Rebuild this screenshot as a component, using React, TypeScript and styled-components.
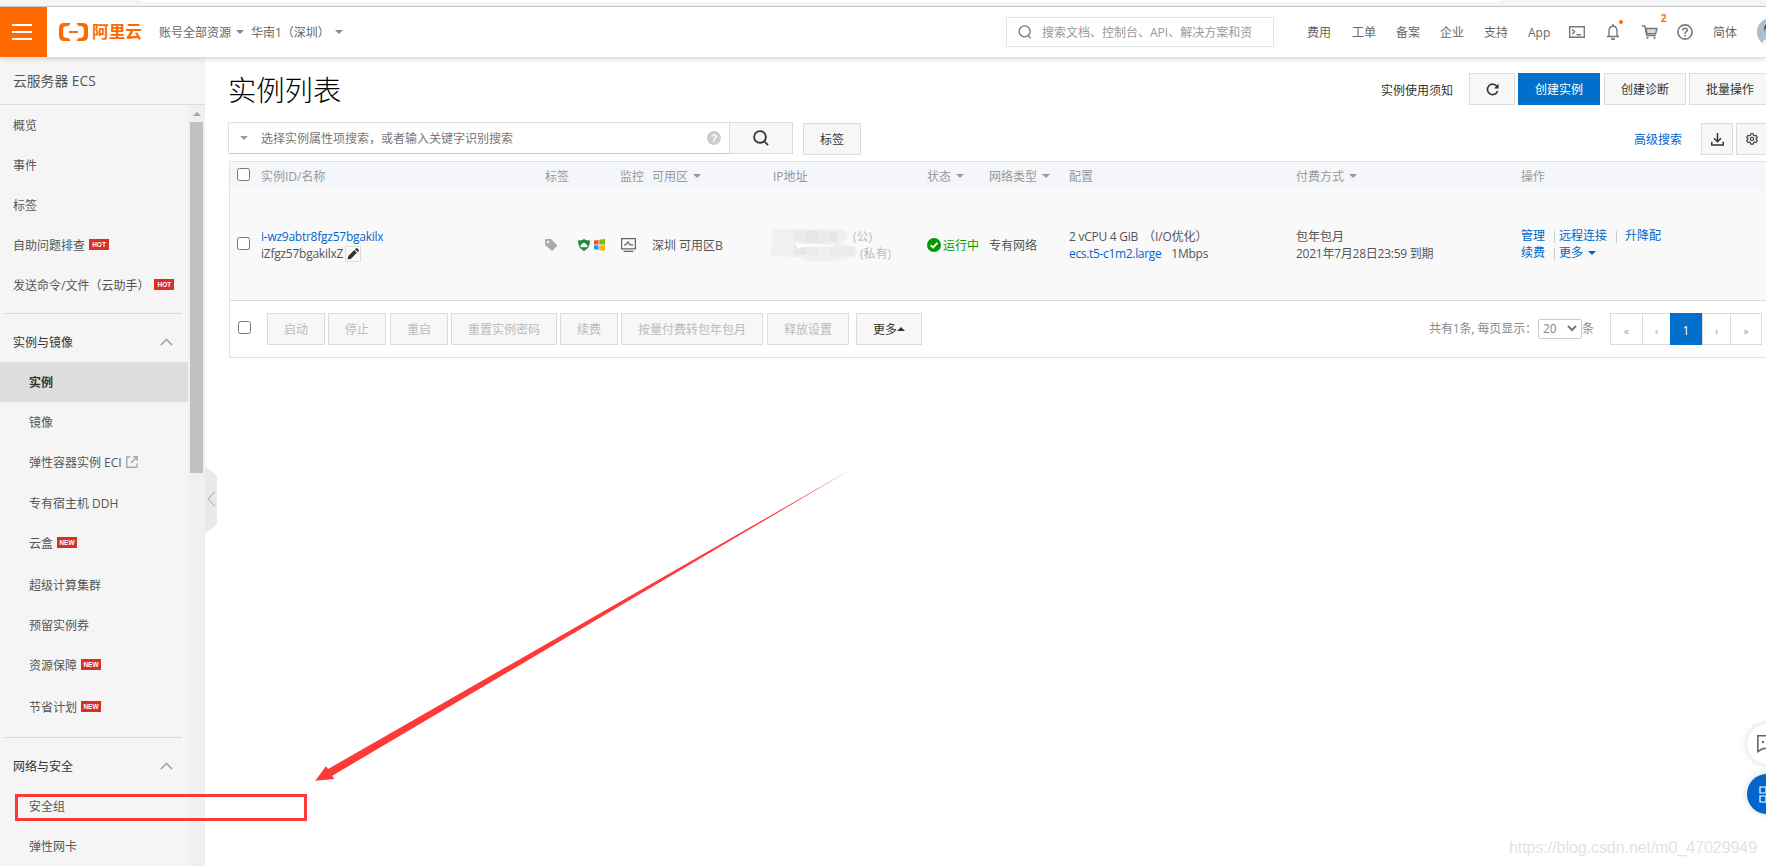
import React from "react";
import styled, { createGlobalStyle, css } from "styled-components";

const Global = createGlobalStyle`
  *, *::before, *::after { box-sizing: border-box; }
  html, body { margin: 0; padding: 0; overflow: hidden; background: #fff; }
  body { font: 12px/17px "Open Sans", "Noto Sans CJK SC", sans-serif; color: #555; }
  svg { display: block; flex: none; }
  a { color: #06c; text-decoration: none; }
`;

const Page = styled.div`
  width: 1766px; height: 866px; position: relative; overflow: hidden;
  display: flex; flex-direction: column; white-space: nowrap;
`;
const BrowserStrip = styled.div`
  height: 7px; flex: none; background: #f5f5f5; border-bottom: 1px solid #ccc;
  padding-left: 141px;
`;
const AddressBar = styled.div`
  width: 1360px; height: 2px; background: #fff; border-radius: 0 0 3px 3px;
`;
const TopBar = styled.header`
  height: 50px; flex: none; background: #fff; display: flex; align-items: center;
  position: relative; z-index: 2; box-shadow: 0 1px 0 #dcdcdc, 0 2px 5px rgba(0,0,0,.16);
  color: #666;
`;
const MenuButton = styled.div`
  width: 47px; height: 50px; background: #ff6a00; display: flex; flex-direction: column;
  align-items: center; justify-content: center; gap: 5px; padding-right: 3px;
  i { width: 20px; height: 2px; background: #fff; }
`;
const Brand = styled.div`
  display: flex; align-items: center; gap: 4px; margin-left: 12px; width: 100px;
  color: #ff6a00; font-size: 16.7px; font-weight: 700; line-height: 24px;
`;
const TopSelect = styled.div<{ $w: number; $gap: number }>`
  width: ${p => p.$w}px; display: flex; align-items: center; gap: ${p => p.$gap}px;
`;
const Caret = styled.i<{ $up?: boolean; $color?: string; $size?: number }>`
  width: 0; height: 0; flex: none;
  border: ${p => p.$size ?? 4}px solid transparent;
  ${p => p.$up
    ? css`border-bottom-color: ${p.$color ?? "#888"}; border-top: 0;`
    : css`border-top-color: ${p.$color ?? "#888"}; border-bottom: 0;`}
`;
const TopSearch = styled.div`
  margin-left: auto; width: 268px; height: 30px; border: 1px solid #e3e3e3; color: #999;
  display: flex; align-items: center; gap: 10px; padding-left: 11px;
`;
const TopNav = styled.nav`
  display: flex; align-items: center; margin-left: 33px; width: 459px; flex: none;
`;
const TopItem = styled.div<{ $w: number }>`
  width: ${p => p.$w}px; flex: none; position: relative; display: flex; align-items: center;
`;
const Dot = styled.i`
  position: absolute; left: 13px; top: -4px; width: 4px; height: 4px; border-radius: 50%; background: #ff6a00;
`;
const Count = styled.b`
  position: absolute; left: 19px; top: -13px; color: #ff6a00; font: 700 10px/14px "Liberation Sans", sans-serif;
`;
const Avatar = styled.div`
  width: 28px; height: 28px; flex: none; border-radius: 50%; overflow: hidden; background: #a9c1cc;
`;

const Body = styled.div` flex: 1; min-height: 0; display: flex; `;
const Sidebar = styled.aside`
  width: 205px; flex: none; background: #f5f5f5; display: flex; flex-direction: column;
`;
const ServiceName = styled.div`
  height: 48px; flex: none; padding: 0 13px; border-bottom: 1px solid #dcdcdc;
  display: flex; align-items: center; font-size: 13.8px;
`;
const SideScroll = styled.div` flex: 1; min-height: 0; display: flex; overflow: hidden; `;
const NavList = styled.div` width: 188px; `;
const NavItem = styled.div<{ $child?: boolean; $active?: boolean; $top?: number }>`
  height: 40px; margin-top: ${p => p.$top ?? 0}px; padding-left: ${p => (p.$child ? 29 : 13)}px;
  display: flex; align-items: center;
  ${p => p.$active && css`background: #ddd; color: #333; font-weight: 700;`}
`;
const Section = styled.div`
  height: 40px; padding: 0 15px 0 13px; display: flex; align-items: center;
  justify-content: space-between; color: #333;
`;
const Divider = styled.div<{ $top: number }>`
  height: 1px; margin: ${p => p.$top}px 6px 8px 4px; background: #d8d8d8;
`;
const Badge = styled.span<{ $ml?: number }>`
  width: 20px; height: 11px; margin: 0 0 2px ${p => p.$ml ?? 4}px; background: #d93026; color: #fff;
  font: 700 6.5px/11px "Liberation Sans", sans-serif; text-align: center;
`;
const ScrollTrack = styled.div`
  width: 17px; background: #f0f0f0; display: flex; flex-direction: column; align-items: center; padding-top: 7px;
`;
const Thumb = styled.div` width: 13px; height: 351px; margin-top: 6px; background: #c1c1c1; `;
const CollapseHandle = styled.div`
  width: 12px; height: 66px; margin-top: 410px; flex: none; background: #e9e9e9;
  clip-path: polygon(0 0, 100% 12%, 100% 88%, 0 100%);
  display: flex; align-items: center; justify-content: center; padding-bottom: 2px;
`;

const Main = styled.main` width: 1549px; flex: none; padding-left: 11px; `;
const HeadRow = styled.div`
  height: 64px; margin-right: -5px; display: flex; align-items: center; color: #333;
`;
const Title = styled.h1`
  margin: 0; padding-top: 2px; font-size: 28.3px; line-height: 40px; font-weight: 300; color: #000; flex: 1;
`;
const Notice = styled.span` padding-top: 2px; `;
const Button = styled.div<{ $w: number; $primary?: boolean; $off?: boolean; $ml?: number }>`
  width: ${p => p.$w}px; height: 32px; margin-left: ${p => p.$ml ?? 3}px; flex: none;
  border: 1px solid ${p => (p.$primary ? "#0070cc" : "#dcdcdc")};
  background: ${p => (p.$primary ? "#0070cc" : "#f7f7f7")};
  color: ${p => (p.$primary ? "#fff" : p.$off ? "#bbb" : "#333")};
  display: flex; align-items: center; justify-content: center;
`;
const FilterRow = styled.div`
  height: 40px; display: flex; align-items: center; padding-bottom: 4px;
`;
const SearchField = styled.div`
  width: 502px; height: 32px; flex: none; margin-top: -2px; border: 1px solid #ddd; border-bottom-color: #c8c8c8;
  border-radius: 2px 0 0 2px; display: flex; align-items: center; padding: 0 8px 0 11px; color: #777;
  span { margin-left: 13px; flex: 1; }
`;
const SearchBtn = styled(Button)` margin-top: -2px; `;
const HelpDot = styled.i`
  width: 14px; height: 14px; border-radius: 50%; background: #ccc; color: #fff;
  font: 700 11px/14px "Liberation Sans", sans-serif; text-align: center;
`;
const Table = styled.section`
  margin-left: 1px; border: solid #dfe2e8; border-width: 1px 0 1px 1px; width: 1537px;
`;
const gridCols = css`
  display: grid; grid-template-columns: 31px 284px 75px 32px 121px 154px 62px 80px 227px 225px 1fr;
`;
const TableHead = styled.div`
  ${gridCols} height: 28px; background: #f4f6fa; color: #999; align-items: center;
`;
const HeadCell = styled.div` display: flex; align-items: center; gap: 5px; `;
const TableRow = styled.div`
  ${gridCols} height: 111px; background: #f9f9f9; border-bottom: 1px solid #dcdcdc; align-items: center;
`;
const Check = styled.i<{ $ml?: number }>`
  width: 13px; height: 13px; flex: none; margin: 0 0 3px ${p => p.$ml ?? 7}px; background: #fff;
  border: 1px solid #767676; border-radius: 2.5px;
`;
const Line = styled.div<{ $pl?: number; $muted?: boolean }>`
  height: 17px; display: flex; align-items: center; padding-left: ${p => p.$pl ?? 0}px;
  ${p => p.$muted && "color: #bbb;"}
`;
const Tight = styled.span<{ $by?: number }>` letter-spacing: -${p => p.$by ?? 0.25}px; `;
const EditBox = styled.div`
  width: 16px; height: 16px; margin-left: 2px; border: 1px solid #ddd; display: flex; align-items: center; justify-content: center;
`;
const IconRow = styled.div` display: flex; align-items: center; `;
const IpCell = styled.div` display: flex; align-items: center; margin-left: -3px; `;
const IpLabels = styled.div` margin-left: -4px; `;
const Status = styled.div` display: flex; align-items: center; gap: 2px; color: #090; `;
const Actions = styled.div` padding-bottom: 2px; `;
const Sep = styled.i<{ $r?: number }>` width: 1px; height: 12px; background: #ccc; margin: 2px ${p => p.$r ?? 4}px 0 9px; `;
const Gap = styled.i<{ $w: number }>` width: ${p => p.$w}px; flex: none; `;
const TableFoot = styled.div` height: 56px; display: flex; align-items: center; `;
const PageInfo = styled.div` margin-left: auto; display: flex; align-items: center; color: #888; padding-bottom: 1px; `;
const SizeSelect = styled.div`
  width: 44px; height: 20px; margin-left: 1px; border: 1px solid #ccc; border-radius: 2px;
  display: flex; align-items: center; justify-content: space-between; padding: 0 4px; color: #888;
`;
const Pager = styled.div`
  margin: 0 4px 0 16px; height: 32px; width: 152px; border: 1px solid #dcdcdc; display: flex; flex: none;
`;
const PageCell = styled.div<{ $w: number; $on?: boolean }>`
  width: ${p => p.$w}px; flex: none; display: flex; align-items: center; justify-content: center;
  font-size: ${p => (p.$on ? 12 : 10)}px; padding-top: ${p => (p.$on ? 2 : 5)}px; color: #999;
  & + & { border-left: 1px solid #dcdcdc; }
  ${p => p.$on && css`&&& { background: #0070cc; color: #fff; margin: -1px 0; border: 0; }`}
`;

const FloatTools = styled.div`
  position: absolute; left: 1747px; top: 724px; display: flex; flex-direction: column; gap: 10px;
`;
const FloatBtn = styled.div<{ $blue?: boolean }>`
  width: 40px; height: 40px; border-radius: 50%; background: ${p => (p.$blue ? "#06c" : "#fff")};
  box-shadow: 0 0 6px rgba(0,0,0,.18); display: flex; align-items: center; justify-content: center;
`;
const Watermark = styled.div`
  position: absolute; right: 9px; bottom: 8px; font: 16px/20px "Liberation Sans", sans-serif;
  letter-spacing: -.06px; color: #e3e3e3;
`;
const Highlight = styled.div`
  position: absolute; left: 15px; top: 794px; width: 292px; height: 27px; border: 3px solid #ff3838; z-index: 3;
`;
const Arrow = styled.svg` position: absolute; left: 310px; top: 465px; z-index: 3; `;

const ChevronUp = () => (
  <svg width="13" height="8" viewBox="0 0 13 8" fill="none" stroke="#aaa" strokeWidth="1.7"><path d="M.8 7.2 6.5 1.5l5.7 5.7" /></svg>
);

const Logo = () => (
  <svg width="29" height="18" viewBox="0 0 29 18" fill="#ff6a00">
    <path d="M11.5 0H5Q0 0 0 5v8q0 5 5 5h6.500l-1.300-2.600-4.400-1q-1.600-.5-1.600-2.200V5.800q0-1.700 1.600-2.200l4.400-1zM17.500 0H24q5 0 5 5v8q0 5-5 5h-6.500l1.300-2.600 4.400-1q1.600-.5 1.600-2.200V5.800q0-1.700-1.600-2.200l-4.400-1zM10 8h9v2h-9z" />
  </svg>
);

const navTop: [string, string?, number?][] = [
  ["概览"], ["事件"], ["标签"], ["自助问题排查", "HOT"], ["发送命令/文件（云助手）", "HOT", 5],
];
const headCells: [string, boolean?][] = [
  ["实例ID/名称"], ["标签"], ["监控"], ["可用区", true], ["IP地址"], ["状态", true],
  ["网络类型", true], ["配置"], ["付费方式", true], ["操作"],
];
const footButtons: [string, number, number][] = [
  ["启动", 58, 16], ["停止", 58, 3], ["重启", 58, 4], ["重置实例密码", 106, 3],
  ["续费", 58, 3], ["按量付费转包年包月", 142, 3], ["释放设置", 82, 4],
];

export default function App() {
  return (
    <Page>
      <Global />
      <BrowserStrip><AddressBar /></BrowserStrip>
      <TopBar>
        <MenuButton><i /><i /><i /></MenuButton>
        <Brand><Logo />阿里云</Brand>
        <TopSelect $w={92} $gap={5}>账号全部资源<Caret /></TopSelect>
        <TopSelect $w={110} $gap={5}>华南1（深圳）<Caret /></TopSelect>
        <TopSearch>
          <svg width="14" height="14" viewBox="0 0 14 14" fill="none" stroke="#777" strokeWidth="1.3">
            <circle cx="6.600" cy="6.400" r="5.500" /><path d="m10.300 10.300 2.400 3" />
          </svg>
          搜索文档、控制台、API、解决方案和资
        </TopSearch>
        <TopNav>
          <TopItem $w={45}>费用</TopItem>
          <TopItem $w={44}>工单</TopItem>
          <TopItem $w={44}>备案</TopItem>
          <TopItem $w={44}>企业</TopItem>
          <TopItem $w={44}>支持</TopItem>
          <TopItem $w={41}>App</TopItem>
          <TopItem $w={37}>
            <svg width="16" height="12" viewBox="0 0 16 12" fill="none" stroke="#777" strokeWidth="1.400">
              <path d="M.7.7h14.600v10.600H.7zM3.200 3.300l2.500 2.500-2.500 2.500M7.500 8.700h4.500" />
            </svg>
          </TopItem>
          <TopItem $w={36}>
            <svg width="14" height="16" viewBox="0 0 14 16" fill="none" stroke="#777" strokeWidth="1.400">
              <path d="M7 0v2M3 12.300V7q0-4.500 4-5 4 .5 4 5v5.300M1 12.500h12" /><path d="M5 15h4" strokeWidth="1.800" />
            </svg>
            <Dot />
          </TopItem>
          <TopItem $w={35}>
            <svg width="16" height="14" viewBox="0 0 16 14" fill="none" stroke="#777" strokeWidth="1.400">
              <path d="M0 1h2.800l2 9.500h9" /><path d="M4 3.500h11l-1.400 5.200H5z" fill="#ddd" />
              <circle cx="5.500" cy="12.800" r="1.100" fill="#777" stroke="none" /><circle cx="12.500" cy="12.800" r="1.100" fill="#777" stroke="none" />
            </svg>
            <Count>2</Count>
          </TopItem>
          <TopItem $w={36}>
            <svg width="16" height="16" viewBox="0 0 16 16" fill="none" stroke="#777" strokeWidth="1.600">
              <circle cx="8" cy="8" r="7.100" /><path d="M5.800 6.500q0-2.200 2.200-2.200t2.200 2q0 1-1.100 1.600T8 9.700M8 10.800v1.700" />
            </svg>
          </TopItem>
          <TopItem $w={44}>简体</TopItem>
          <Avatar>
            <svg width="28" height="28" viewBox="0 0 28 28">
              <path d="M7 11q0-6 7-7v8l-6 2z" fill="#5b4a48" /><path d="M8 11h6v8h-4q-2-2-2-8z" fill="#e0a890" />
              <path d="M5 28q0-8 9-8v8z" fill="#f5f7f8" />
            </svg>
          </Avatar>
        </TopNav>
      </TopBar>

      <Body>
        <Sidebar>
          <ServiceName>云服务器 ECS</ServiceName>
          <SideScroll>
            <NavList>
              {navTop.map(([t, b, ml]) => (
                <NavItem key={t}>{t}{b && <Badge $ml={ml}>{b}</Badge>}</NavItem>
              ))}
              <Divider $top={8} />
              <Section>实例与镜像<ChevronUp /></Section>
              <NavItem $child $active>实例</NavItem>
              <NavItem $child>镜像</NavItem>
              <NavItem $child>
                弹性容器实例 ECI
                <Gap $w={4} />
                <svg width="12" height="12" viewBox="0 0 12 12" fill="none" stroke="#aaa" strokeWidth="1.500">
                  <path d="M4.500 1H.8v10.200H11V7.500M7 .8h4.200V5M11 1 5 7" />
                </svg>
              </NavItem>
              <NavItem $child $top={1}>专有宿主机 DDH</NavItem>
              <NavItem $child>云盒<Badge>NEW</Badge></NavItem>
              <NavItem $child $top={2}>超级计算集群</NavItem>
              <NavItem $child>预留实例券</NavItem>
              <NavItem $child>资源保障<Badge>NEW</Badge></NavItem>
              <NavItem $child $top={2}>节省计划<Badge>NEW</Badge></NavItem>
              <Divider $top={10} />
              <Section>网络与安全<ChevronUp /></Section>
              <NavItem $child>安全组</NavItem>
              <NavItem $child>弹性网卡</NavItem>
            </NavList>
            <ScrollTrack><Caret $up $color="#a3a3a3" /><Thumb /></ScrollTrack>
          </SideScroll>
        </Sidebar>
        <CollapseHandle>
          <svg width="9" height="16" viewBox="0 0 9 16" fill="none" stroke="#bbb" strokeWidth="1.200"><path d="M8 .7 1 8l7 7.300" /></svg>
        </CollapseHandle>

        <Main>
          <HeadRow>
            <Title>实例列表</Title>
            <Notice>实例使用须知</Notice>
            <Button $w={46} $ml={16}>
              <svg width="13" height="13" viewBox="0 0 13 13" fill="none" stroke="#333" strokeWidth="1.600">
                <path d="M11 3.500A5.200 5.200 0 1 0 11.600 8" /><path d="M12.600.8v4.700H8z" fill="#333" stroke="none" />
              </svg>
            </Button>
            <Button $w={82} $primary>创建实例</Button>
            <Button $w={82} $ml={4}>创建诊断</Button>
            <Button $w={82}>批量操作</Button>
          </HeadRow>
          <FilterRow>
            <SearchField>
              <Caret $color="#999" />
              <span>选择实例属性项搜索，或者输入关键字识别搜索</span>
              <HelpDot>?</HelpDot>
            </SearchField>
            <SearchBtn $w={64} $ml={-1}>
              <svg width="16" height="16" viewBox="0 0 16 16" fill="none" stroke="#333" strokeWidth="1.800">
                <circle cx="7" cy="7" r="5.900" /><path d="m11 11 4 4.200" />
              </svg>
            </SearchBtn>
            <Button $w={58} $ml={10}>标签</Button>
            <Gap $w={773} />
            <a>高级搜索</a>
            <Button $w={32} $ml={19}>
              <svg width="13" height="13" viewBox="0 0 13 13" fill="none" stroke="#333" strokeWidth="1.500">
                <path d="M6.500 0v8.500M3 5.300l3.500 3.500L10 5.300M.8 8.800v3.200h11.400V8.800" />
              </svg>
            </Button>
            <Button $w={32}>
              <svg width="12" height="12" viewBox="0 0 12 12" fill="none" stroke="#444" strokeWidth="1.200">
                <circle cx="6" cy="6" r="1.700" />
                <path d="M4.800.8h2.400l.4 1.500 1 .6 1.500-.4 1.200 2-1.100 1.100v.8l1.100 1.100-1.200 2-1.500-.4-1 .6-.4 1.500H4.800l-.4-1.500-1-.6-1.500.4-1.200-2 1.100-1.100v-.8L.7 4.500l1.200-2 1.500.4 1-.6z" />
              </svg>
            </Button>
          </FilterRow>

          <Table>
            <TableHead>
              <Check />
              {headCells.map(([t, c]) => <HeadCell key={t}>{t}{c && <Caret $color="#999" />}</HeadCell>)}
            </TableHead>
            <TableRow>
              <Check />
              <div>
                <Line><a><Tight>i-wz9abtr8fgz57bgakilx</Tight></a></Line>
                <Line>
                  <Tight>iZfgz57bgakilxZ</Tight>
                  <EditBox>
                    <svg width="12" height="12" viewBox="0 0 12 12" fill="#333"><path d="M.5 11.500 1.300 8 7.200 2.100 9.900 4.800 4 10.700zM8 1.300 9 .3q.6-.5 1.200 0l1.500 1.500q.5.6 0 1.200l-1 1z" /></svg>
                  </EditBox>
                </Line>
              </div>
              <IconRow>
                <svg width="12" height="12" viewBox="0 0 12 12"><path fillRule="evenodd" fill="#aaa" d="M0 1q0-1 1-1h5l6 6q.5.500 0 1l-5 5L0 6zM3 1.800a1.200 1.200 0 1 0 0 2.400 1.200 1.200 0 0 0 0-2.400z" /></svg>
                <Gap $w={21} />
                <svg width="12" height="12" viewBox="0 0 12 12"><path fill="#1d8a3e" d="M0 1.500Q4 1.500 6 0q2 1.500 6 1.500 0 8-6 10.500Q0 9.500 0 1.500z" /><path fill="#fff" d="M3.500 8.200q-1.500-.5-1-2 .4-.8 1.200-.8.600-1.600 2.300-1.600t2.300 1.600q1.200.1 1.300 1.300 0 1.100-1.100 1.500z" /></svg>
                <Gap $w={4} />
                <svg width="11" height="12" viewBox="0 0 11 12"><path fill="#f25022" d="m0 1.500 4.500-.6v4.600H0z" /><path fill="#7fba00" d="M5.200.8 11 0v5.500H5.200z" /><path fill="#00a4ef" d="M0 6.200h4.500v4.600L0 10.200z" /><path fill="#ffb900" d="M5.200 6.200H11V12l-5.800-.8z" /></svg>
              </IconRow>
              <Line $pl={1}>
                <svg width="15" height="14" viewBox="0 0 15 14" fill="none" stroke="#666" strokeWidth="1.200"><path d="M.6.6h13.800v10.300H.6zM2.500 13.400h10M3 6.800h1.500L7 4l2 2.800h3" /></svg>
              </Line>
              <div>深圳 可用区B</div>
              <IpCell>
                <svg width="87" height="33" viewBox="0 0 87 33">
                  <path fill="#f0f0f1" d="M2 1 12 0l62 1q5 4 3 8l-6 6 14 3q3 6 0 9l-14 4q-30 5-42-3L1 27Q-1 20 3 16z" />
                  <path fill="#e6e7e8" d="M36 1h12v13H36zM60 3h8v10h-8zM24 16h12v10H24z" /><path fill="#eaebec" d="M48 1h12v13H48zM24 1h12v12H24zM60 18h24v9H60zM36 17h12v9H36z" />
                  <path fill="#fff" d="m25 14 6 1 34 1v1l-34 1-3 2z" />
                </svg>
                <IpLabels>
                  <Line $muted>(公)</Line>
                  <Line $muted $pl={7}>(私有)</Line>
                </IpLabels>
              </IpCell>
              <Status>
                <svg width="14" height="14" viewBox="0 0 14 14"><circle cx="7" cy="7" r="7" fill="#090" /><path d="m3.700 7.200 2.400 2.300 4.300-4.600" fill="none" stroke="#fff" strokeWidth="1.900" /></svg>
                运行中
              </Status>
              <div>专有网络</div>
              <div>
                <Line><Tight>2 vCPU 4 GiB</Tight><Gap $w={5} /><Tight $by={0.12}>（I/O优化）</Tight></Line>
                <Line><a><Tight $by={0.33}>ecs.t5-c1m2.large</Tight></a><Gap $w={10} /><Tight>1Mbps</Tight></Line>
              </div>
              <div>
                <Line>包年包月</Line>
                <Line><Tight>2021年7月28日23:59 到期</Tight></Line>
              </div>
              <Actions>
                <Line><a>管理</a><Sep /><a>远程连接</a><Sep $r={8} /><a>升降配</a></Line>
                <Line><a>续费</a><Sep /><a>更多</a><Gap $w={5} /><Caret $color="#06c" /></Line>
              </Actions>
            </TableRow>
            <TableFoot>
              <Check $ml={8} />
              {footButtons.map(([t, w, ml]) => <Button key={t} $w={w} $ml={ml} $off>{t}</Button>)}
              <Button $w={66} $ml={7}>更多<Caret $up $color="#333" /></Button>
              <PageInfo><Tight $by={0.1}>共有1条, 每页显示：</Tight><SizeSelect>20
                <svg width="10" height="7" viewBox="0 0 10 7" fill="none" stroke="#777" strokeWidth="2"><path d="m1 1 4 4 4-4" /></svg>
              </SizeSelect>条</PageInfo>
              <Pager>
                <PageCell $w={31}>«</PageCell>
                <PageCell $w={28}>‹</PageCell>
                <PageCell $w={32} $on>1</PageCell>
                <PageCell $w={28}>›</PageCell>
                <PageCell $w={31}>»</PageCell>
              </Pager>
            </TableFoot>
          </Table>
        </Main>
      </Body>

      <FloatTools>
        <FloatBtn>
          <svg width="20" height="18" viewBox="0 0 20 18" fill="none" stroke="#666" strokeWidth="1.600"><path d="M.8.8h18.400v12.700H6L.8 16.500z" /><path d="M5 7h2M9 7h2M13 7h2" strokeWidth="2" /></svg>
        </FloatBtn>
        <FloatBtn $blue>
          <svg width="17" height="17" viewBox="0 0 17 17" fill="none" stroke="#fff" strokeWidth="1.200"><path d="M1 1h6v6H1zM10 1h6v6h-6zM1 10h6v6H1zM10 10h6v6h-6z" /></svg>
        </FloatBtn>
      </FloatTools>
      <Watermark>https://blog.csdn.net/m0_47029949</Watermark>
      <Highlight />
      <Arrow width="545" height="320" viewBox="310 465 545 320">
        <path fill="#ff3838" d="M315.200 780.800 326 766.200l2.100 2.800L850 470 332.300 775.700l1.900 3.400z" />
      </Arrow>
    </Page>
  );
}
